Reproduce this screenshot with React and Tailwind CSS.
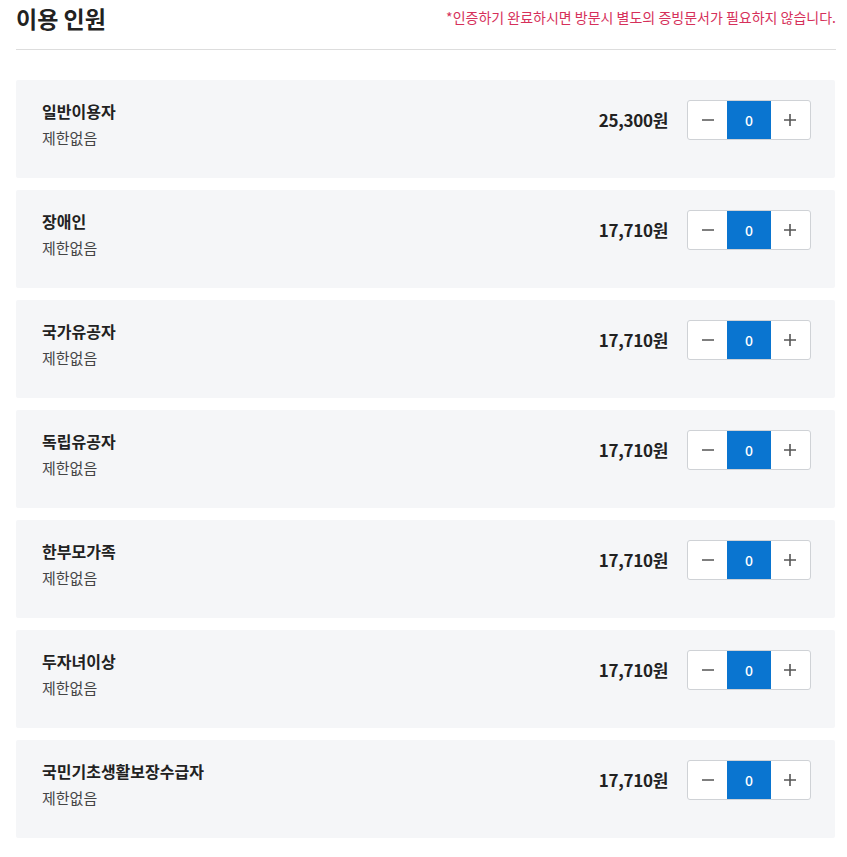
const rows = [
  { name: '일반이용자', price: '25,300원' },
  { name: '장애인', price: '17,710원' },
  { name: '국가유공자', price: '17,710원' },
  { name: '독립유공자', price: '17,710원' },
  { name: '한부모가족', price: '17,710원' },
  { name: '두자녀이상', price: '17,710원' },
  { name: '국민기초생활보장수급자', price: '17,710원' },
];

const Minus = () => (
  <svg width="14" height="14" viewBox="0 0 14 14">
    <path d="M1 7h12" stroke="#555" strokeWidth="1.6" />
  </svg>
);

const Plus = () => (
  <svg width="14" height="14" viewBox="0 0 14 14">
    <path d="M1 7h12M7 1v12" stroke="#555" strokeWidth="1.6" />
  </svg>
);

const Stepper = () => (
  <div className="flex h-10 w-[124px] rounded-[3px] border border-[#cfd2d6] bg-white overflow-hidden">
    <button className="flex w-10 items-center justify-center">
      <Minus />
    </button>
    <div className="flex w-11 items-center justify-center bg-[#0a75d0] text-[14px] font-medium text-white">0</div>
    <button className="flex w-10 items-center justify-center">
      <Plus />
    </button>
  </div>
);

export default function App() {
  return (
    <div className="min-h-screen bg-white px-4 font-['Noto_Sans_CJK_KR','Noto_Sans',sans-serif] text-[#222]">
      <div className="flex h-[50px] w-[820px] items-start justify-between border-b border-[#dddddd]">
        <h2 className="mt-[2px] text-[23px] font-bold leading-[32px]">이용 인원</h2>
        <p className="mt-[7px] text-[14px] leading-[20px] text-[#d6305a]">
          *인증하기 완료하시면 방문시 별도의 증빙문서가 필요하지 않습니다.
        </p>
      </div>
      <ul className="mt-[30px] flex w-[819px] flex-col gap-3">
        {rows.map((r) => (
          <li key={r.name} className="flex h-[98px] items-start justify-between rounded-[2px] bg-[#f5f6f8] pl-[26px] pr-[24px] pt-5">
            <div>
              <p className="text-[16px] font-bold leading-[22px]">{r.name}</p>
              <p className="mt-[6px] text-[15px] leading-[20px] text-[#444]">제한없음</p>
            </div>
            <div className="flex items-center gap-[19px]">
              <span className="text-[17px] font-bold tracking-[-0.3px]">{r.price}</span>
              <Stepper />
            </div>
          </li>
        ))}
      </ul>
    </div>
  );
}
